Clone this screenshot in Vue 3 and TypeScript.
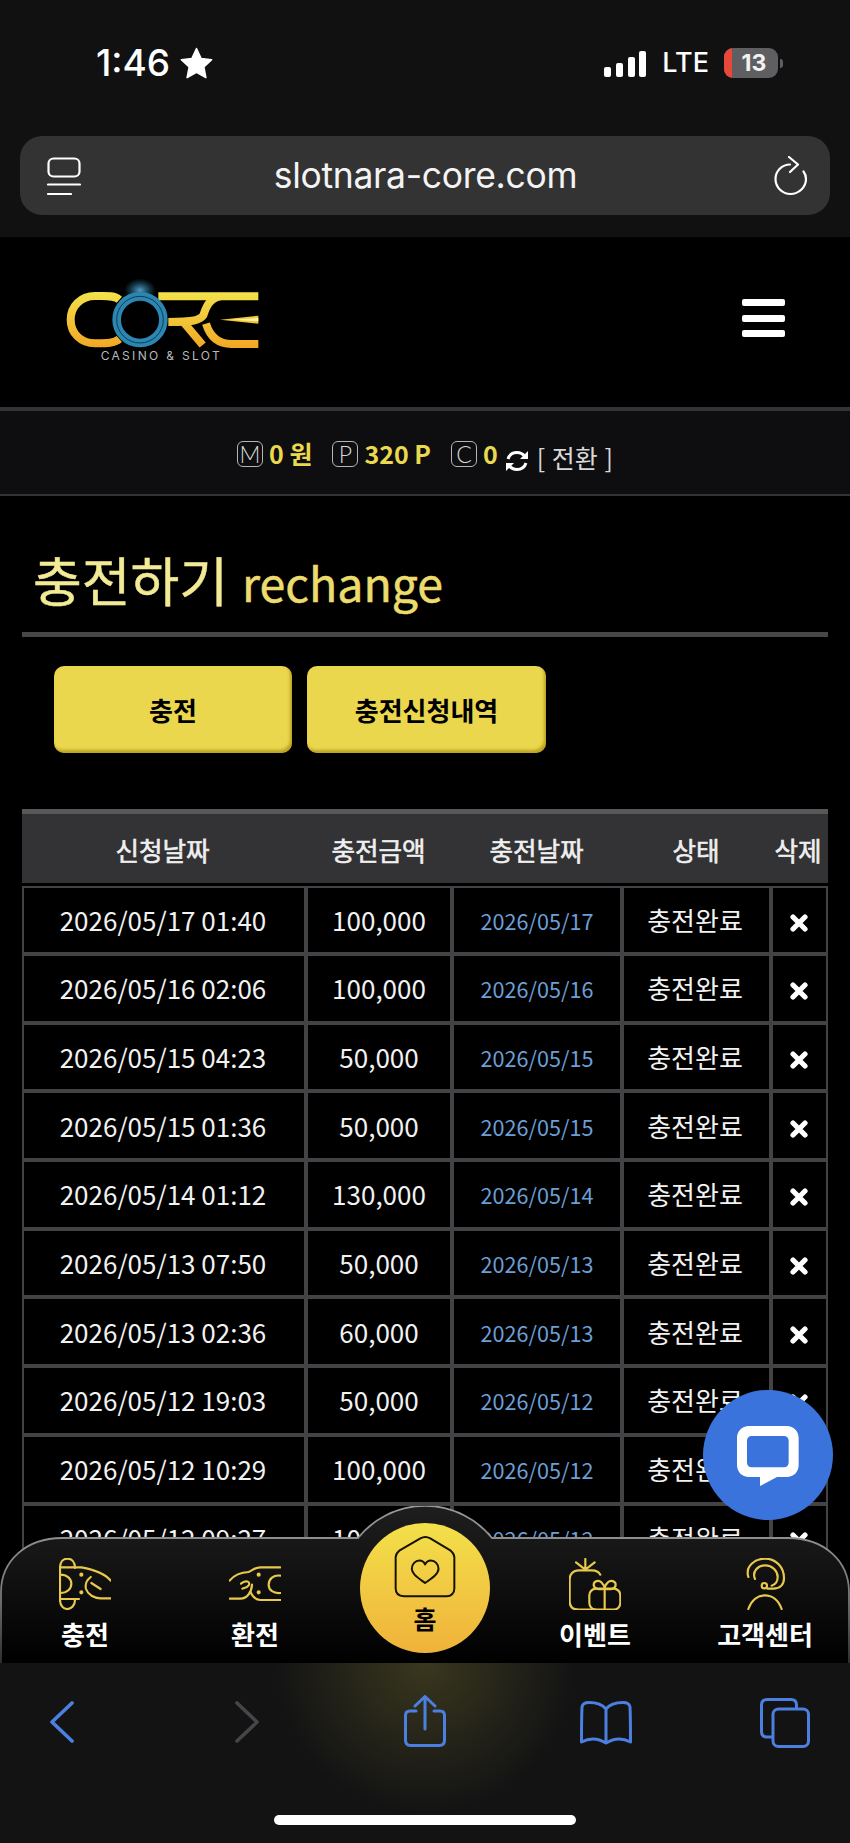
<script setup lang="ts">
interface Row {
  requested: string
  amount: string
  charged: string
}
const rows: Row[] = [
  { requested: '2026/05/17 01:40', amount: '100,000', charged: '2026/05/17' },
  { requested: '2026/05/16 02:06', amount: '100,000', charged: '2026/05/16' },
  { requested: '2026/05/15 04:23', amount: '50,000', charged: '2026/05/15' },
  { requested: '2026/05/15 01:36', amount: '50,000', charged: '2026/05/15' },
  { requested: '2026/05/14 01:12', amount: '130,000', charged: '2026/05/14' },
  { requested: '2026/05/13 07:50', amount: '50,000', charged: '2026/05/13' },
  { requested: '2026/05/13 02:36', amount: '60,000', charged: '2026/05/13' },
  { requested: '2026/05/12 19:03', amount: '50,000', charged: '2026/05/12' },
  { requested: '2026/05/12 10:29', amount: '100,000', charged: '2026/05/12' },
  { requested: '2026/05/12 09:27', amount: '100,000', charged: '2026/05/12' }
]
const headers: string[] = ['신청날짜', '충전금액', '충전날짜', '상태', '삭제']
</script>

<template>
  <div class="phone">
    <header class="chrome-top">
      <div class="status">
        <div class="status-left">
          <span class="time">1:46</span>
          <svg class="star" viewBox="0 0 32 32"><path d="M16 1.5l4.4 9.6 10.3 1.2-7.6 7.1 2 10.3L16 24.6l-9.1 5.1 2-10.3-7.6-7.1 10.3-1.2z" fill="#fff" stroke="#fff" stroke-width="1.5" stroke-linejoin="round"/></svg>
        </div>
        <div class="status-right">
          <div class="signal"><i class="b1"></i><i class="b2"></i><i class="b3"></i><i class="b4"></i></div>
          <span class="lte">LTE</span>
          <div class="battery"><span class="battery-red"></span><span class="battery-num">13</span></div>
          <span class="battery-nub"></span>
        </div>
      </div>
      <div class="urlbar">
        <svg class="url-menu" viewBox="0 0 34 38" fill="none" stroke="#fff" stroke-width="2.2" stroke-linecap="round">
          <rect x="1.5" y="1.5" width="31" height="18" rx="5"/>
          <path d="M1 27.5H33M1 37H24" />
        </svg>
        <span class="url-text">slotnara-core.com</span>
        <svg class="url-reload" viewBox="0 0 34 40" fill="none" stroke="#fff" stroke-width="2.2" stroke-linecap="round" stroke-linejoin="round">
          <path d="M16 8.5C8 8.5 1.5 15 1.5 23S8 38 16.500 38 32 31 32 23c0-3-1-5.500-2.500-7.500"/>
          <path d="M15 1l9 7.500-8 7.500"/>
        </svg>
      </div>
    </header>

    <div class="site-head">
      <svg class="logo" viewBox="0 -30 720 280" role="img" aria-label="CORE">
        <defs>
          <linearGradient id="lgu" gradientUnits="userSpaceOnUse" x1="0" y1="15" x2="0" y2="180">
            <stop offset="0" stop-color="#f3e24c"/>
            <stop offset="1" stop-color="#f2a824"/>
          </linearGradient>
          <radialGradient id="glow">
            <stop offset="0" stop-color="#5fb8e8" stop-opacity=".85"/>
            <stop offset="1" stop-color="#2b86b0" stop-opacity="0"/>
          </radialGradient>
        </defs>
        <ellipse cx="300" cy="10" rx="48" ry="36" fill="url(#glow)"/>
        <g fill="none" stroke="url(#lgu)" stroke-width="24">
          <path d="M238 38C222 24 196 27 165 27C122 27 92 58 92 98S122 169 165 169C196 169 222 170 238 156"/>
          <path d="M355 28H655"/>
          <path d="M540 28C505 36 497 65 490 85C480 100 460 105 385 105"/>
          <path d="M430 105L488 174"/>
          <path d="M498 110C510 150 535 171 575 171H655"/>
        </g>
        <polygon points="540,98 655,86 655,110" fill="url(#lgu)"/>
        <polygon points="570,98 655,93 655,103" fill="#fff3a8"/>
        <circle cx="300" cy="98" r="70" fill="none" stroke="#2c86b2" stroke-width="26"/>
        <circle cx="300" cy="98" r="70" fill="none" stroke="#0e3b52" stroke-width="3"/>
        <text x="364" y="220" text-anchor="middle" class="logo-sub">CASINO &amp; SLOT</text>
      </svg>
      <button class="burger" type="button" aria-label="menu"><i></i><i></i><i></i></button>
    </div>

    <div class="balance">
      <span class="tag">M</span><b class="val val-m">0 원</b>
      <span class="tag">P</span><b class="val val-p">320 P</b>
      <span class="tag">C</span><b class="val val-c">0</b>
      <svg class="swap" viewBox="0 0 24 22" fill="none" stroke="#fff" stroke-width="3">
        <path d="M3 9C4.500 4.500 8 2.500 12 2.500c3.500 0 6 1.500 8 4"/>
        <path d="M21 13c-1.500 4.500-5 6.500-9 6.500-3.500 0-6-1.500-8-4"/>
        <path d="M23 1v8h-8z" fill="#fff" stroke="none"/>
        <path d="M1 21v-8h8z" fill="#fff" stroke="none"/>
      </svg>
      <span class="convert">[ 전환 ]</span>
    </div>

    <main class="content">
      <h1 class="title"><span class="title-ko">충전하기</span><span class="title-en">rechange</span></h1>
      <div class="tabs">
        <button class="tab tab-a" type="button">충전</button>
        <button class="tab tab-b" type="button">충전신청내역</button>
      </div>
      <table class="list">
        <colgroup>
          <col class="c1"/><col class="c2"/><col class="c3"/><col class="c4"/><col class="c5"/>
        </colgroup>
        <thead>
          <tr><th v-for="h in headers" :key="h">{{ h }}</th></tr>
        </thead>
        <tbody>
          <tr v-for="r in rows" :key="r.requested">
            <td class="first">{{ r.requested }}</td>
            <td>{{ r.amount }}</td>
            <td class="blue">{{ r.charged }}</td>
            <td class="state">충전완료</td>
            <td class="action">
              <svg class="del" viewBox="0 0 18 18"><path d="M3 3L15 15M15 3L3 15" stroke="#fff" stroke-width="5.200" stroke-linecap="round"/></svg>
            </td>
          </tr>
        </tbody>
      </table>
    </main>

    <button class="chat" type="button" aria-label="chat">
      <svg viewBox="142 142 186 182" class="chat-icon">
        <path fill="#fff" fill-rule="evenodd" d="M178 142H291C312 142 327 157 327 178V259C327 280 312 295 291 295H262L211 322V295H178C157 295 142 280 142 259V178C142 157 157 142 178 142ZM186 172C178 172 172 178 172 186V252C172 260 178 266 186 266H283C291 266 297 260 297 252V186C297 178 291 172 283 172Z"/>
      </svg>
    </button>

    <nav class="bottom-nav">
      <svg class="nav-shape" viewBox="0 0 850 157" preserveAspectRatio="none">
        <defs>
          <linearGradient id="navfill" x1="0" y1="0" x2="0" y2="1">
            <stop offset="0" stop-color="#1e1e1e"/>
            <stop offset=".35" stop-color="#141414"/>
            <stop offset="1" stop-color="#000"/>
          </linearGradient>
          <linearGradient id="navline" x1="0" y1="0" x2="0" y2="1">
            <stop offset="0" stop-color="#9a9a9a"/>
            <stop offset=".6" stop-color="#777"/>
            <stop offset="1" stop-color="#333"/>
          </linearGradient>
        </defs>
        <path d="M1 157V86C1 55 26 32 62 32H358A86 86 0 0 1 492 32H788C824 32 849 55 849 86V157" fill="url(#navfill)" stroke="url(#navline)" stroke-width="1.800"/>
      </svg>
      <a class="nav-item">
        <svg class="nav-icon" viewBox="85 115 156 156" fill="none" stroke="#e8c94c" stroke-width="6.500" stroke-linecap="round" stroke-linejoin="round">
          <path d="M133 145C133 126 122 117 110 117C98 117 88 126 88 145V240C88 258 98 268 110 268C122 268 133 258 133 240"/>
          <path d="M88 143H152C190 150 222 160 240 183"/>
          <path d="M88 238H145"/>
          <path d="M240 236H210C190 236 172 225 166 208C162 192 170 180 180 172"/>
          <path d="M182 190L210 208"/>
          <path d="M88 165C110 165 122 178 122 192C122 207 110 220 88 220"/>
          <circle cx="152" cy="165" r="3" fill="#e8c94c"/>
          <circle cx="152" cy="218" r="3" fill="#e8c94c"/>
        </svg>
        <span class="nav-label">충전</span>
      </a>
      <a class="nav-item">
        <svg class="nav-icon" viewBox="596 115 156 156" fill="none" stroke="#e8c94c" stroke-width="6.500" stroke-linecap="round" stroke-linejoin="round">
          <path d="M750 143H690C672 143 668 152 655 157C630 158 610 168 598 183"/>
          <path d="M598 237H630C650 237 664 218 665 195"/>
          <path d="M750 241H690C676 241 666 230 660 216"/>
          <path d="M632 192C645 180 662 185 655 197C650 204 642 205 636 207"/>
          <path d="M750 168C730 165 715 178 715 195C715 212 730 222 750 220"/>
          <circle cx="685" cy="165" r="3" fill="#e8c94c"/>
          <circle cx="685" cy="218" r="3" fill="#e8c94c"/>
        </svg>
        <span class="nav-label">환전</span>
      </a>
      <a class="nav-item home">
        <svg class="home-icon" viewBox="130 103 188 190" fill="none" stroke="#161200" stroke-width="6" stroke-linejoin="round">
          <path d="M135 170C135 160 140 155 146 150L210 113C220 107 230 107 240 113L302 150C308 155 313 160 313 170V265C313 280 303 288 290 288H160C145 288 135 280 135 265Z"/>
          <path d="M224 248C200 230 184 220 184 205C184 190 195 180 207 180C215 180 221 184 224 192C228 184 234 180 242 180C254 180 265 190 265 205C265 220 248 232 224 248Z"/>
        </svg>
        <span class="home-label">홈</span>
      </a>
      <a class="nav-item">
        <svg class="nav-icon" viewBox="416 115 156 156" fill="none" stroke="#e8c94c" stroke-width="6.500" stroke-linecap="round" stroke-linejoin="round">
          <path d="M465 150V118M465 150L437 128M465 150L493 128"/>
          <path d="M510 165C505 156 497 152 485 152H445C428 152 418 165 418 178V245C418 262 428 270 445 270H495"/>
          <rect x="477" y="207" width="93" height="63" rx="20"/>
          <path d="M523 207V270"/>
          <path d="M523 207C505 212 490 206 490 195C490 184 505 180 513 188C519 194 523 200 523 207C523 200 527 194 533 188C541 180 556 184 556 195C556 206 541 212 523 207Z"/>
        </svg>
        <span class="nav-label">이벤트</span>
      </a>
      <a class="nav-item">
        <svg class="nav-icon" viewBox="927 115 156 156" fill="none" stroke="#e8c94c" stroke-width="6.500" stroke-linecap="round" stroke-linejoin="round">
          <path d="M955 172C945 140 975 117 1005 117C1040 117 1062 145 1062 175C1062 195 1050 207 1030 207H1012"/>
          <path d="M975 178C965 155 985 137 1005 137C1028 137 1043 155 1043 172C1043 185 1035 195 1025 198"/>
          <circle cx="1003" cy="198" r="8"/>
          <path d="M955 268C965 240 985 227 1005 227C1025 227 1045 240 1055 268"/>
        </svg>
        <span class="nav-label">고객센터</span>
      </a>
    </nav>

    <footer class="chrome-bottom">
      <div class="tools">
        <svg class="t-back" viewBox="0 0 24 42" fill="none" stroke="#4c80e0" stroke-width="3.600" stroke-linecap="round" stroke-linejoin="round"><path d="M22 2L2 21L22 40"/></svg>
        <svg class="t-fwd" viewBox="0 0 24 42" fill="none" stroke="#46464a" stroke-width="3.600" stroke-linecap="round" stroke-linejoin="round"><path d="M2 2L22 21L2 40"/></svg>
        <svg class="t-share" viewBox="0 0 42 52" fill="none" stroke="#4c80e0" stroke-width="3" stroke-linecap="round" stroke-linejoin="round">
          <path d="M12 16H6C3 16 1.500 18 1.500 20.500V45C1.500 48.500 3 50.500 6.500 50.500H35.500C39 50.500 40.500 48.500 40.500 45V20.500C40.500 18 39 16 36 16H30"/>
          <path d="M21 34V2M11 11L21 1.500L31 11"/>
        </svg>
        <svg class="t-book" viewBox="0 0 52 44" fill="none" stroke="#4c80e0" stroke-width="3" stroke-linecap="round" stroke-linejoin="round">
          <path d="M26 8C22 3 15 1.500 9 1.500C5 1.500 2.500 3 2 6C1.500 16 1.500 30 1.500 41C9 37 18 37 26 42C34 37 43 37 50.500 41C50.500 30 50.500 16 50 6C49.500 3 47 1.500 43 1.500C37 1.500 30 3 26 8V42"/>
        </svg>
        <svg class="t-tabs" viewBox="0 0 50 50" fill="none" stroke="#4c80e0" stroke-width="3" stroke-linejoin="round">
          <path d="M12 39H7C3.500 39 1.500 37 1.500 33.500V7C1.500 3.500 3.500 1.500 7 1.500H31C34.500 1.500 36.500 3.500 36.500 7V11"/>
          <rect x="13" y="11" width="35.500" height="37.500" rx="5.500"/>
        </svg>
      </div>
      <div class="home-indicator"></div>
    </footer>
  </div>
</template>

<style scoped>
.phone {
  position: relative;
  width: 850px;
  height: 1843px;
  overflow: hidden;
  background: #000;
  display: flex;
  flex-direction: column;
  font-family: "Noto Sans CJK KR", "Noto Sans", sans-serif;
  color: #fff;
}
.chrome-top {
  height: 237px;
  flex: none;
  background: #111112;
  padding: 0 20px;
  box-sizing: border-box;
}
.status {
  height: 136px;
  display: flex;
  justify-content: space-between;
  align-items: flex-start;
  padding: 47px 47px 0 76px;
  box-sizing: border-box;
}
.status-left { display: flex; align-items: center; gap: 10px; height: 32px; }
.time {
  font-family: Inter, sans-serif;
  font-size: 37px;
  font-weight: 500;
  line-height: 32px;
}
.star { width: 33px; height: 33px; }
.status-right { display: flex; align-items: center; height: 32px; }
.signal { display: flex; align-items: flex-end; gap: 4.7px; height: 27px; }
.signal i { width: 7px; border-radius: 2px; background: #fff; display: block; }
.b1 { height: 10px; }
.b2 { height: 14px; }
.b3 { height: 20px; }
.b4 { height: 26px; }
.lte {
  font-family: Inter, sans-serif;
  font-size: 27px;
  font-weight: 500;
  margin-left: 16px;
  line-height: 32px;
}
.battery {
  position: relative;
  width: 54px;
  height: 30px;
  margin-left: 15px;
  border-radius: 9px;
  background: #5f5f61;
  overflow: hidden;
  display: flex;
  align-items: center;
  justify-content: center;
}
.battery-red { position: absolute; left: 0; top: 0; bottom: 0; width: 8px; background: #e8483a; }
.battery-num {
  position: relative;
  font-family: Inter, sans-serif;
  font-size: 23px;
  font-weight: 700;
  margin-left: 6px;
  color: #f2f2f2;
}
.battery-nub { width: 3px; height: 9px; margin-left: 2px; background: #5f5f61; border-radius: 0 3px 3px 0; }
.urlbar {
  height: 79px;
  background: #333334;
  border-radius: 22px;
  display: flex;
  align-items: center;
  justify-content: space-between;
  padding: 0 22px 0 27px;
}
.url-menu { width: 34px; height: 38px; }
.url-text {
  font-family: Inter, sans-serif;
  font-size: 35.500px;
  font-weight: 400;
  line-height: 79px;
  color: #f4f4f4;
  letter-spacing: -0.3px;
  margin-right: 4px;
}
.url-reload { width: 34px; height: 40px; }

.site-head {
  height: 170px;
  flex: none;
  background: #000;
  position: relative;
  display: flex;
  align-items: flex-start;
  justify-content: space-between;
  padding: 40px 65px 0 40px;
  box-sizing: border-box;
}
.logo { width: 240px; height: 93.330px; display: block; }
.logo-sub {
  font-family: Inter, sans-serif;
  font-size: 36px;
  letter-spacing: 7px;
  fill: #b9b9bc;
}
.burger {
  width: 43px;
  height: 38px;
  margin-top: 22px;
  padding: 0;
  background: none;
  border: 0;
  display: flex;
  flex-direction: column;
  justify-content: space-between;
}
.burger i { height: 7px; background: #fff; border-radius: 2px; display: block; }

.balance {
  height: 89px;
  flex: none;
  box-sizing: border-box;
  background: #0e0e10;
  border-top: 4px solid #333336;
  border-bottom: 2px solid #333336;
  display: flex;
  align-items: center;
  padding: 3px 0 0 237px;
}
.tag {
  width: 26px;
  height: 26px;
  box-sizing: border-box;
  border: 1.500px solid #b5b5b5;
  border-radius: 6px;
  display: flex;
  align-items: center;
  justify-content: center;
  font-family: Lato, sans-serif;
  font-weight: 300;
  font-size: 23px;
  color: #d8d8d8;
}
.val { color: #ead84f; font-size: 25px; font-weight: 700; margin-left: 6px; line-height: 30px; margin-bottom: 2px; }
.val-m { margin-right: 20px; }
.val-p { margin-right: 20px; }
.val-c { margin-right: 7px; }
.swap { width: 24px; height: 22px; margin-top: 14px; }
.convert { margin-left: 8px; font-size: 25px; color: #d8d8d8; line-height: 30px; margin-top: 6px; word-spacing: 1px; }

.content { flex: 1; min-height: 0; padding: 0 22px; }
.title {
  margin: 0;
  height: 141px;
  box-sizing: border-box;
  border-bottom: 5px solid #47474a;
  display: flex;
  align-items: baseline;
  padding: 51px 0 0 11px;
  font-weight: 400;
  line-height: 64px;
}
.title-ko { font-size: 53px; color: #f2ea94; -webkit-text-stroke: 0.5px #f2ea94; }
.title-en { font-size: 46.500px; color: #ecdc6e; margin-left: 14px; -webkit-text-stroke: 0.5px #ecdc6e; }
.tabs { display: flex; gap: 15px; margin: 29px 0 0 32px; }
.tab {
  height: 87px;
  padding: 0;
  border: 0;
  border-radius: 10px;
  background: #ead74e;
  box-shadow: inset -2px -3px 3px rgba(150, 120, 0, .55);
  color: #000;
  font-family: inherit;
  font-size: 26px;
  font-weight: 700;
}
.tab-a { width: 238px; }
.tab-b { width: 239px; }
.list {
  margin-top: 56px;
  width: 806px;
  table-layout: fixed;
  border-collapse: separate;
  border-spacing: 0;
}
.c1 { width: 286px; }
.c2 { width: 146px; }
.c3 { width: 170px; }
.c4 { width: 149px; }
.c5 { width: 55px; }
th {
  height: 77px;
  box-sizing: border-box;
  padding: 1px 5px 0 0;
  background: #333336;
  border-top: 5px solid #58585b;
  border-bottom: 3px solid #000;
  background-clip: padding-box;
  font-size: 25.600px;
  font-weight: 400;
  -webkit-text-stroke: 0.6px #efefef;
  color: #efefef;
  text-align: center;
}
td {
  height: 68.700px;
  box-sizing: border-box;
  padding: 0;
  background: #000;
  border-right: 4px solid #434346;
  border-bottom: 4px solid #434346;
  text-align: center;
  font-size: 26px;
  font-weight: 400;
  line-height: 34px;
  color: #f2f2f2;
}
td:first-child { border-left: 2px solid #434346; }
td:last-child { border-right: 2px solid #434346; }
tbody tr:first-child td { border-top: 2px solid #434346; height: 70px; }
td.first { padding-right: 2px; }
td.state { padding-right: 3px; }
td.action { padding-right: 2px; }
.blue { color: #6b9fd6; font-size: 21.600px; padding-top: 2px; }
.del { width: 18px; height: 18px; display: block; margin: 6px auto 0; }

.chat {
  position: absolute;
  left: 703px;
  top: 1390px;
  width: 130px;
  height: 130px;
  padding: 0;
  border: 0;
  border-radius: 50%;
  background: #3b73dc;
  display: flex;
  align-items: center;
  justify-content: center;
  z-index: 3;
}
.chat-icon { width: 62px; height: 60.700px; margin-top: 2px; }

.bottom-nav {
  position: absolute;
  left: 0;
  top: 1506px;
  width: 850px;
  height: 157px;
  display: flex;
  z-index: 2;
}
.nav-shape { position: absolute; inset: 0; width: 850px; height: 157px; }
.nav-item {
  position: relative;
  flex: 1;
  display: flex;
  flex-direction: column;
  align-items: center;
  padding-top: 52px;
  box-sizing: border-box;
}
.nav-icon { width: 52px; height: 52px; display: block; }
.nav-label {
  margin-top: 6px;
  font-size: 26px;
  font-weight: 700;
  line-height: 36px;
  color: #fff;
}
.home {
  flex: none;
  width: 130px;
  height: 130px;
  margin: 17px 20px 0;
  padding-top: 12px;
  border-radius: 50%;
  background: linear-gradient(180deg, #f3e04a 0%, #f0b23a 100%);
}
.home-icon { width: 62px; height: 63px; display: block; }
.home-label {
  margin-top: 3px;
  font-size: 25px;
  font-weight: 700;
  line-height: 34px;
  color: #000;
}

.chrome-bottom {
  position: absolute;
  left: 0;
  top: 1663px;
  width: 850px;
  height: 180px;
  background:
    radial-gradient(ellipse 150px 150px at 50% 0, rgba(96, 92, 40, .5), rgba(60, 60, 30, 0) 100%),
    #131314;
  z-index: 2;
}
.tools { position: relative; height: 152px; }
.tools svg { position: absolute; }
.t-back { left: 50px; top: 38px; width: 24px; height: 42px; }
.t-fwd { left: 235px; top: 38px; width: 24px; height: 42px; }
.t-share { left: 404px; top: 32px; width: 42px; height: 52px; }
.t-book { left: 580px; top: 38px; width: 52px; height: 44px; }
.t-tabs { left: 760px; top: 35px; width: 50px; height: 50px; }
.home-indicator {
  width: 302px;
  height: 10px;
  margin: 0 auto;
  background: #fff;
  border-radius: 5px;
}
button { cursor: pointer; }
</style>
